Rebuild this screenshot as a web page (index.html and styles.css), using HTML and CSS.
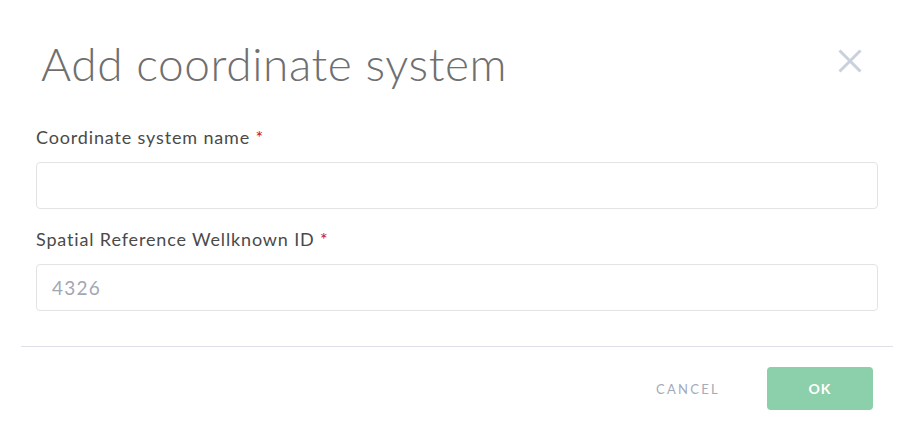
FILE: index.html
```html
<!DOCTYPE html>
<html>
<head>
<meta charset="utf-8">
<link rel="stylesheet" href="styles.css">
</head>
<body>
<div class="modal">
  <div class="header">
    <h1 class="title">Add coordinate system</h1>
    <button class="close" aria-label="Close">
      <svg width="24" height="24" viewBox="0 0 24 24"><path d="M1.5 1.5 L22.5 22.5 M22.5 1.5 L1.5 22.5" stroke="#c9d1dc" stroke-width="3" fill="none"/></svg>
    </button>
  </div>
  <div class="body">
    <div class="field">
      <label class="label">Coordinate system name <span class="req">*</span></label>
      <input class="input" type="text">
    </div>
    <div class="field">
      <label class="label">Spatial Reference Wellknown ID <span class="req">*</span></label>
      <input class="input" type="text" placeholder="4326">
    </div>
  </div>
  <div class="footer">
    <button class="btn-cancel">CANCEL</button>
    <button class="btn-ok">OK</button>
  </div>
</div>
</body>
</html>
```
FILE: styles.css
```css
html, body {
  margin: 0;
  padding: 0;
  background: #ffffff;
  font-family: "Lato", "Open Sans", sans-serif;
}
.modal {
  width: 872px;
  margin-left: 21px;
}
.header {
  display: flex;
  justify-content: space-between;
  align-items: center;
  padding: 36px 31px 0 20px;
  height: 56px;
}
.title {
  margin: 0;
  font-size: 46px;
  font-weight: 300;
  line-height: 56px;
  letter-spacing: 0.6px;
  color: #6f6f6f;
}
.close {
  border: none;
  background: none;
  padding: 0;
  width: 24px;
  height: 24px;
  display: flex;
  position: relative;
  top: -3px;
}
.body {
  padding: 33px 15px 35px 15px;
  border-bottom: 1px solid #dde0e6;
}
.field + .field {
  margin-top: 18px;
}
.label {
  display: block;
  font-size: 18px;
  line-height: 24px;
  letter-spacing: 0.85px;
  color: #4a4a4a;
  margin-bottom: 13px;
}
.req {
  color: #c8102e;
}
.input {
  display: block;
  box-sizing: border-box;
  width: 842px;
  height: 47px;
  border: 1px solid #e3e3e3;
  border-radius: 4px;
  padding: 0 15px;
  font-family: inherit;
  font-size: 19px;
  letter-spacing: 1.2px;
  color: #4a4a4a;
  outline: none;
}
.input::placeholder {
  color: #a3a7b3;
}
.footer {
  display: flex;
  justify-content: flex-end;
  align-items: center;
  padding: 20px 20px 0 0;
  gap: 47px;
}
.btn-cancel {
  border: none;
  background: none;
  padding: 0;
  font-family: inherit;
  font-size: 13px;
  letter-spacing: 2.3px;
  color: #a3aabb;
}
.btn-ok {
  border: none;
  border-radius: 4px;
  width: 106px;
  height: 43px;
  background: #8ccfab;
  color: #ffffff;
  font-family: inherit;
  font-weight: 700;
  font-size: 14px;
  letter-spacing: 1px;
}
```
